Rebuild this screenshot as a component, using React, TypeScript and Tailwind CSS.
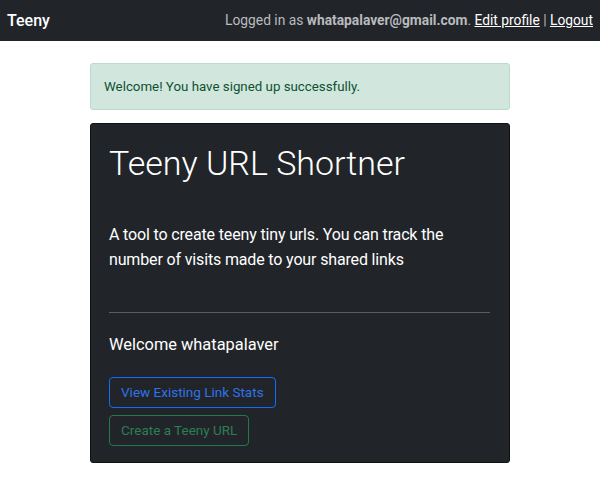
import React from "react";

export default function App() {
  return (
    <div className="min-h-[480px] w-[600px] bg-white" style={{ fontFamily: "Roboto, 'Liberation Sans', sans-serif" }}>
      <nav className="flex h-[41px] items-center justify-between bg-[#212529] px-[7px]">
        <span className="text-[16px] font-medium text-white">Teeny</span>
        <span className="text-[13.8px] text-[#b9bbbe]">
          Logged in as <b className="font-bold">whatapalaver@gmail.com</b>.{" "}
          <a className="text-white underline">Edit profile</a> | <a className="text-white underline">Logout</a>
        </span>
      </nav>
      <div className="mx-auto mt-[22px] w-[420px]">
        <div className="flex h-[47px] items-center rounded-[3px] border border-[#badbcc] bg-[#d1e7dd] px-[13px] text-[13.3px] text-[#0f5132]">
          Welcome! You have signed up successfully.
        </div>
        <div className="mt-[13px] flex flex-col rounded-[3px] border border-[#111] bg-[#212529] pl-[18px] pr-[19px] pb-[16px] pt-[18px] text-white">
          <h1 className="text-[34px] font-light leading-[42px]">Teeny URL Shortner</h1>
          <p className="mt-[38px] text-[16px] tracking-[-0.15px] font-normal leading-[25px]">
            <span className="block whitespace-nowrap">A tool to create teeny tiny urls. You can track the</span>
            <span className="block whitespace-nowrap">number of visits made to your shared links</span>
          </p>
          <hr className="mt-[40px] border-t border-[#5a5e62]" />
          <p className="mt-[20px] text-[16.4px] font-normal leading-[24px]">Welcome whatapalaver</p>
          <div className="mt-[20px] flex flex-col items-start gap-[7px]">
            <button className="h-[31px] rounded-[4px] border border-[#0d6efd] px-[11px] text-[13.5px] text-[#2f73e8]">
              View Existing Link Stats
            </button>
            <button className="h-[31px] rounded-[4px] border border-[#1f7a4c] px-[11px] text-[13.5px] text-[#2f7d52]">
              Create a Teeny URL
            </button>
          </div>
        </div>
      </div>
    </div>
  );
}
